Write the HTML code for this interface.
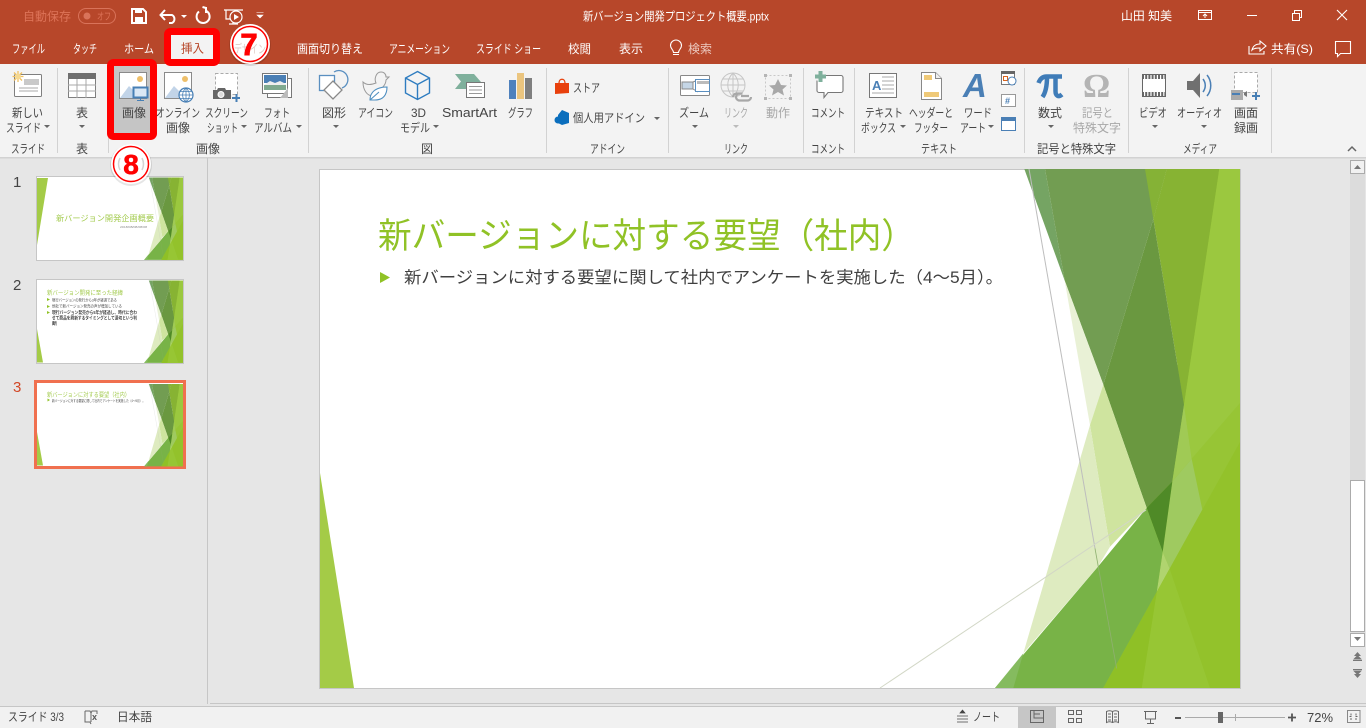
<!DOCTYPE html>
<html lang="ja"><head><meta charset="utf-8"><title>新バージョン開発プロジェクト概要.pptx</title>
<style>
html,body{margin:0;padding:0;width:1366px;height:728px;overflow:hidden;background:#e6e6e6}
svg{display:block}
text{font-family:"Liberation Sans","Noto Sans CJK JP",sans-serif;font-size:12px;fill:#444}
.t{fill:#fff}
.g{fill:#a8a8a8}
.c{text-anchor:middle}
</style></head><body>
<svg xmlns="http://www.w3.org/2000/svg" width="1366" height="728" viewBox="0 0 1366 728">
<defs>
<g id="deco" transform="translate(980,169) scale(.33333,.33789) translate(0,-12)">
<polygon points="718,12 780,12 780,1548 370,1548 500,1015" fill="#97c535"/>
<polygon points="133,12 195,12 254,342" fill="#75a463"/>
<polygon points="195,12 560,12 520,160 370,650 254,342" fill="#729d52"/>
<polygon points="495,12 560,12 520,160" fill="#85b236"/>
<polygon points="560,12 718,12 612,710 520,160" fill="#87b333"/>
<polygon points="370,650 520,160 612,710 577,937 500,1015" fill="#6a9840"/>
<polygon points="718,12 780,12 780,705 635,870 612,710" fill="#9bc83f"/>
<polygon points="612,710 635,870 577,937" fill="#a0ca55"/>
<polygon points="635,870 780,705 780,820 667,1020" fill="#97c535"/>
<polygon points="577,937 635,870 667,1020 569,1195 548,1145" fill="#9fca60"/>
<polygon points="548,1145 569,1195 530,1265" fill="#b0d46f"/>
<polygon points="500,1015 577,937 548,1145" fill="#4f8a27"/>
<polygon points="500,1015 548,1145 530,1265 370,1548 45,1548 353,1190" fill="#78b347"/>
<polygon points="45,1548 130,1445 100,1548" fill="#85bb5f"/>
<polygon points="780,820 780,1548 370,1548" fill="#93c22b"/>
<polygon points="530,1265 569,1195 690,1548 485,1548" fill="#97c634"/>
<polygon points="530,1265 485,1548 370,1548" fill="#8fc026"/>
<polygon points="254,342 370,650 330,770" fill="#e9f1d6"/>
<polygon points="330,770 370,650 500,1015 390,1130" fill="#cfe49f"/>
<polygon points="330,770 390,1130 353,1190 130,1445" fill="#deebc0"/>
<line x1="147" y1="12" x2="345" y2="1135" stroke="#bdbdbd" stroke-width="3"/>
<line x1="345" y1="1135" x2="410" y2="1490" stroke="#8fb070" stroke-width="2.5"/>
</g>
</defs>

<!-- backgrounds -->
<rect width="1366" height="728" fill="#e6e6e6"/>
<rect width="1366" height="64" fill="#b7472a"/>
<rect y="64" width="1366" height="93" fill="#f3f3f3"/>
<rect y="157" width="1366" height="1.5" fill="#d2d2d2"/>
<rect x="207" y="158" width="1" height="546" fill="#c6c6c6"/>
<rect x="210" y="703" width="1156" height="1" fill="#c6c6c6"/>
<rect y="706" width="1366" height="22" fill="#f1f1f1"/>
<rect y="706" width="1366" height="1" fill="#c6c6c6"/>

<!-- title bar -->
<text x="23" y="20.5" textLength="48" lengthAdjust="spacingAndGlyphs" style="fill:#dd7358">自動保存</text>
<rect x="78.5" y="8.5" width="37" height="15" rx="7.5" fill="none" stroke="#d9735a"/>
<circle cx="87" cy="16" r="3.5" fill="#d9735a"/>
<text x="97" y="20" textLength="14" lengthAdjust="spacingAndGlyphs" style="font-size:10px;fill:#dd7358">オフ</text>
<path d="M132 9h11l3 3v11h-14z" fill="none" stroke="#fff" stroke-width="2"/>
<rect x="135" y="9" width="7" height="4" fill="#fff"/><rect x="135" y="17" width="8" height="6" fill="#fff"/>
<path d="M161 15h11a4.5 4.5 0 0 1 0 8h-3M165 10l-4.500 5 4.500 5" fill="none" stroke="#fff" stroke-width="2"/>
<path d="M181 15h6l-3 3z" fill="#fff"/>
<path d="M199 11.500a6.500 6.500 0 1 0 7.500-.5M206 7v6M206 8l-3.500-1" fill="none" stroke="#fff" stroke-width="2"/>
<path d="M224 10h19M226 10v9h7M233 19v5M229 24h9" fill="none" stroke="#fff" stroke-width="1.200"/>
<circle cx="236" cy="17" r="6" fill="#b7472a" stroke="#fff" stroke-width="1.200"/><path d="M234 14l5 3-5 3z" fill="#fff"/>
<path d="M256.500 12.500h7M257 15h6l-3 3z" fill="#fff" stroke="#fff" stroke-width=".6"/>
<text class="t" x="583" y="20.500" textLength="186" lengthAdjust="spacingAndGlyphs">新バージョン開発プロジェクト概要.pptx</text>
<text class="t" x="1121" y="20" textLength="51" lengthAdjust="spacingAndGlyphs">山田 知美</text>
<rect x="1198.500" y="10.500" width="13" height="9" fill="none" stroke="#fff"/><path d="M1198 12.500h14M1205 18v-4M1203 16l2-2 2 2" fill="none" stroke="#fff"/>
<rect x="1247" y="15" width="10" height="1" fill="#fff"/>
<path d="M1292.500 13.500h7v7h-7zM1294.500 13v-2.500h7v7h-2" fill="none" stroke="#fff"/>
<path d="M1337 10l10 10M1347 10l-10 10" stroke="#fff" stroke-width="1.100"/>

<!-- tabs -->
<text class="t" x="12" y="53" textLength="33" lengthAdjust="spacingAndGlyphs">ファイル</text>
<text class="t" x="73" y="53" textLength="24" lengthAdjust="spacingAndGlyphs">タッチ</text>
<text class="t" x="124" y="53" textLength="30" lengthAdjust="spacingAndGlyphs">ホーム</text>
<rect x="167.500" y="31.500" width="49" height="31" rx="3" fill="#f3f3f3" stroke="#f00" stroke-width="7"/>
<rect x="171" y="59" width="42" height="4" fill="#f00"/>
<text x="181" y="52.500" textLength="23" lengthAdjust="spacingAndGlyphs" style="fill:#b7472a">挿入</text>
<text class="t" x="297" y="53" textLength="66" lengthAdjust="spacingAndGlyphs">画面切り替え</text>
<text class="t" x="389" y="53" textLength="61" lengthAdjust="spacingAndGlyphs">アニメーション</text>
<text class="t" x="476" y="53" textLength="65" lengthAdjust="spacingAndGlyphs">スライド ショー</text>
<text class="t" x="568" y="53" textLength="23" lengthAdjust="spacingAndGlyphs">校閲</text>
<text class="t" x="619" y="53" textLength="24" lengthAdjust="spacingAndGlyphs">表示</text>
<path d="M673 54.500h6M673.500 52.500c0-3-3-3.500-3-7a5.500 5.500 0 0 1 11 0c0 3.500-3 4-3 7z" fill="none" stroke="#fff" stroke-width="1.100"/>
<text x="688" y="53" textLength="24" lengthAdjust="spacingAndGlyphs" style="fill:#ecc9bf">検索</text>
<path d="M1249 46v8h15v-3M1252 50c1-4 4-6 8-6v-3l6 5-6 5v-3c-3 0-6 0-8 2z" fill="none" stroke="#fff" stroke-width="1.100"/>
<text class="t" x="1271" y="53" textLength="42" lengthAdjust="spacingAndGlyphs">共有(S)</text>
<path d="M1335.500 41.500h15v12h-10l-3 3v-3h-2z" fill="none" stroke="#fff" stroke-width="1.100"/>

<!-- ribbon separators -->
<g fill="#d2d2d2">
<rect x="57" y="68" width="1" height="85"/><rect x="108" y="68" width="1" height="85"/><rect x="308" y="68" width="1" height="85"/><rect x="546" y="68" width="1" height="85"/><rect x="668" y="68" width="1" height="85"/><rect x="803" y="68" width="1" height="85"/><rect x="854" y="68" width="1" height="85"/><rect x="1024" y="68" width="1" height="85"/><rect x="1128" y="68" width="1" height="85"/><rect x="1271" y="68" width="1" height="85"/>
</g>

<!-- 画像 highlighted button -->
<rect x="110.500" y="62.500" width="43" height="74" rx="3" fill="#c5c5c5" stroke="#f00" stroke-width="7"/>

<!-- icons: slide -->
<rect x="14.500" y="74.500" width="27" height="22" rx="1" fill="#fff" stroke="#7f7f7f"/>
<rect x="24" y="79" width="15" height="6" fill="#c9c9c9"/>
<path d="M19 88h19M19 91h19" stroke="#aaa"/>
<g stroke="#f0c060" stroke-width="1.300"><path d="M18 71v11M12.500 76.500h11M14 72.500l8 8M22 72.500l-8 8"/></g><circle cx="18" cy="76.500" r="3" fill="#f5d890"/>
<!-- table -->
<rect x="68.500" y="73.500" width="27" height="24" fill="#fff" stroke="#7f7f7f"/><rect x="68" y="73" width="28" height="6" fill="#6f6f6f"/>
<path d="M68 85h28M68 91h28M77 79v19M86 79v19" stroke="#a9a9a9"/>
<!-- picture -->
<rect x="119.500" y="72.500" width="27" height="26" fill="#fff" stroke="#8a8a8a"/><circle cx="140" cy="79" r="3" fill="#eebf6a"/><path d="M120 98l9-12 5 5 3-3 8 10z" fill="#c2d4e8"/>
<rect x="133.500" y="87.500" width="14" height="10" fill="#dbe8f5" stroke="#477fb5" stroke-width="2"/><path d="M140.500 98v2M137 100.500h7" stroke="#477fb5"/>
<!-- online -->
<rect x="164.500" y="72.500" width="27" height="26" fill="#fff" stroke="#8a8a8a"/><circle cx="185" cy="79" r="3" fill="#eebf6a"/><path d="M165 98l9-12 5 5 3-3 7 10z" fill="#c2d4e8"/>
<circle cx="186" cy="95" r="7" fill="#fff" stroke="#477fb5" stroke-width="1.200"/><path d="M179 95h14M180.500 91.500h11M180.500 98.500h11M186 88v14M186 88c-4.500 4-4.500 10 0 14M186 88c4.500 4 4.500 10 0 14" fill="none" stroke="#477fb5" stroke-width=".8"/>
<!-- screenshot -->
<rect x="215.500" y="73.500" width="22" height="21" fill="#fff" stroke="#aaa" stroke-dasharray="3 2"/>
<path d="M213 90h4l1-2h7l1 2h5v9h-18z" fill="#666"/><circle cx="221" cy="94.500" r="3" fill="#ddd" stroke="#fff"/>
<path d="M232 98h8M236.500 94v8" stroke="#477fb5" stroke-width="2"/>
<!-- album -->
<rect x="267.500" y="78.500" width="24" height="19" fill="#fff" stroke="#777"/><rect x="262.500" y="73.500" width="25" height="20" fill="#fff" stroke="#777"/><rect x="264" y="75" width="22" height="8" fill="#4a7fb5"/><path d="M264 85l6-4 5 2 5-2 6 3v3h-22z" fill="#eee"/><rect x="264" y="85" width="22" height="5" fill="#7fa98f"/><path d="M280 98l8-10v10z" fill="#bbb"/>
<!-- shapes -->
<rect x="319.500" y="75.500" width="15" height="15" fill="#fff" stroke="#5a8fc0" stroke-width="1.300"/><path d="M334 72a9 9 0 1 1 8 16" fill="none" stroke="#5a8fc0" stroke-width="1.300"/><path d="M333 81l9 9-9 9-9-9z" fill="#fff" stroke="#8a8a8a" stroke-width="1.300"/>
<!-- duck/icon -->
<path d="M363 82c3 3 8 3 13 1-2-4 0-11 5-11 3 0 5 2 5 5h3l-3 3c0 3-2 6-4 8l-9 8c-6 0-10-6-10-14z" fill="none" stroke="#999"/><path d="M370 100c0-8 6-13 17-13 0 8-4 13-12 13zM370 100l9-8" fill="#fff" stroke="#4f8fc0" stroke-width="1.100"/>
<!-- cube -->
<path d="M417.500 71.500l12 6.500v15l-12 6.500-12-6.500v-15zM405.500 78l12 6.500 12-6.500M417.500 84.500v15" fill="none" stroke="#2e7cc0" stroke-width="1.400"/>
<!-- smartart -->
<path d="M455 74h19l7 8-7 7h-19l6-7.500z" fill="#7fb09c"/><rect x="466.500" y="82.500" width="18" height="15" fill="#fff" stroke="#777"/><path d="M469 86.500h13M469 90h13M469 93.500h13" stroke="#999"/>
<!-- chart -->
<rect x="509" y="80" width="7" height="19" fill="#4f81bd"/><rect x="517" y="73" width="7" height="26" fill="#ebc57f"/><rect x="525" y="78" width="7" height="21" fill="#7f7f7f"/>
<!-- store/addin -->
<path d="M555 83h14v10l-14 1z" fill="#e8400c"/><path d="M559 83c0-5 6-5 6 0" fill="none" stroke="#e8400c" stroke-width="1.300"/>
<path d="M562 110l7 3v10l-7 2-4-2v-8z" fill="#0a6ebd"/><circle cx="558" cy="120" r="3.500" fill="#0a6ebd"/>
<!-- zoom -->
<rect x="680.500" y="75.500" width="29" height="20" rx="1" fill="#fff" stroke="#888"/><rect x="682" y="82" width="11" height="7" fill="#c5d6e6" stroke="#888"/><path d="M693 82l5-2M693 89l5 3" stroke="#888"/><rect x="695.500" y="79.500" width="14" height="12" fill="#fff" stroke="#5a8fc0"/><rect x="697" y="81" width="12" height="3" fill="#bbb"/>
<!-- link -->
<g fill="none" stroke="#c6c6c6"><circle cx="733" cy="85" r="12"/><path d="M721 85h24M723 79h20M723 91h20M733 73v24M733 73c-7 7-7 17 0 24M733 73c7 7 7 17 0 24"/></g>
<path d="M733 97a3.500 3.500 0 0 1 3.500-3.500h6M751 97a3.500 3.500 0 0 1-3.500 3.500h-8a3.500 3.500 0 0 1 0-7M741 96h8" fill="none" stroke="#a8a8a8" stroke-width="2.200"/>
<!-- action -->
<rect x="765.500" y="75.500" width="25" height="23" fill="none" stroke="#c8c8c8" stroke-dasharray="2 2"/><path d="M778 79l3 6 6 .5-4.500 4 1.500 6-6-3.500-6 3.500 1.500-6-4.500-4 6-.5z" fill="#a8a8a8"/><g fill="#b5b5b5"><rect x="764" y="74" width="3" height="3"/><rect x="789" y="74" width="3" height="3"/><rect x="764" y="97" width="3" height="3"/><rect x="789" y="97" width="3" height="3"/></g>
<!-- comment -->
<path d="M822 75.500h19a2 2 0 0 1 2 2v13a2 2 0 0 1-2 2h-13l-4 5v-5h-5a2 2 0 0 1-2-2v-10" fill="#fff" stroke="#777" stroke-width="1.100"/><path d="M815 76.500h11M820.500 71v11" stroke="#7fb09c" stroke-width="4"/>
<!-- textbox -->
<rect x="869.500" y="73.500" width="27" height="24" fill="#fff" stroke="#777"/><text x="872" y="90" style="font-size:13px;fill:#4a7fb5;font-weight:bold">A</text><path d="M882 77h12M882 81h12M882 85h12M882 89h12M872 93h22" stroke="#aaa"/>
<!-- header -->
<path d="M921.500 72.500h14l6 6v21h-20z" fill="#fff" stroke="#888"/><path d="M935.500 72.500v6h6" fill="#eee" stroke="#888"/><rect x="924" y="75" width="8" height="5" fill="#efc978"/><rect x="924" y="92" width="15" height="5" fill="#efc978"/>
<!-- wordart -->
<text x="963" y="97" style="font-size:33px;font-weight:bold;font-style:italic;fill:#4a7fb5">A</text>
<rect x="1001.500" y="71.500" width="13" height="13" fill="#fff" stroke="#777"/><rect x="1001" y="71" width="14" height="3" fill="#666"/><rect x="1003.500" y="76.500" width="4" height="4" fill="none" stroke="#d9641e"/><circle cx="1012" cy="81" r="4" fill="#fff" stroke="#4a7fb5"/>
<rect x="1001.500" y="94.500" width="14" height="12" fill="#fff" stroke="#999"/><text x="1005" y="104" style="font-size:9px;font-weight:bold;fill:#4a7fb5">#</text>
<rect x="1001.500" y="117.500" width="14" height="13" fill="#fff" stroke="#4a7fb5"/><rect x="1001" y="117" width="15" height="4" fill="#4a7fb5"/>
<!-- pi omega -->
<path d="M1038.500 83c1.500-4 4-6.500 8-6.500h15.500M1047 77c0 8-1 15-4.500 20M1055.500 77v14c0 5 3 6.500 6.500 3.500" fill="none" stroke="#3f7cb8" stroke-width="4.500"/>
<text x="1083" y="97" style="font-size:34px;font-weight:bold;fill:#b4b4b4;font-family:'Liberation Serif',serif">Ω</text>
<!-- video -->
<rect x="1142.500" y="74.500" width="23" height="22" fill="#fff" stroke="#666" stroke-width="1"/><path d="M1142 77h24M1142 94h24" stroke="#666" stroke-width="4" stroke-dasharray="2 1.200"/>
<!-- audio -->
<path d="M1187 81h6l7-8v25l-7-8h-6z" fill="#707070"/><path d="M1203 79c3 4 3 9 0 13M1207 75c5 6 5 15 0 21" fill="none" stroke="#4a7fb5" stroke-width="1.500"/>
<!-- screen rec -->
<rect x="1234.500" y="72.500" width="23" height="20" fill="#fff" stroke="#aaa" stroke-dasharray="3 2"/><rect x="1231" y="90" width="12" height="10" fill="#aaa"/><rect x="1232" y="93" width="8" height="2" fill="#4a7fb5"/><path d="M1244 93l3-2v6l-3-2z" fill="#777"/><path d="M1252 96h8M1256 92v8" stroke="#477fb5" stroke-width="2"/>

<!-- ribbon labels -->
<g>
<text x="12" y="117" textLength="31" lengthAdjust="spacingAndGlyphs">新しい</text><text x="6" y="132" textLength="35" lengthAdjust="spacingAndGlyphs">スライド</text>
<text class="c" x="82" y="117">表</text>
<text x="122" y="117" textLength="24" lengthAdjust="spacingAndGlyphs">画像</text>
<text x="156" y="117" textLength="44" lengthAdjust="spacingAndGlyphs">オンライン</text><text x="166" y="132" textLength="24" lengthAdjust="spacingAndGlyphs">画像</text>
<text x="205" y="117" textLength="43" lengthAdjust="spacingAndGlyphs">スクリーン</text><text x="207" y="132" textLength="31" lengthAdjust="spacingAndGlyphs">ショット</text>
<text x="264" y="117" textLength="26" lengthAdjust="spacingAndGlyphs">フォト</text><text x="254" y="132" textLength="38" lengthAdjust="spacingAndGlyphs">アルバム</text>
<text x="322" y="117" textLength="24" lengthAdjust="spacingAndGlyphs">図形</text>
<text x="358" y="117" textLength="35" lengthAdjust="spacingAndGlyphs">アイコン</text>
<text x="411" y="117" textLength="15" lengthAdjust="spacingAndGlyphs">3D</text><text x="400" y="132" textLength="30" lengthAdjust="spacingAndGlyphs">モデル</text>
<text x="442" y="117" textLength="55" lengthAdjust="spacingAndGlyphs" style="font-size:13px">SmartArt</text>
<text x="508" y="117" textLength="25" lengthAdjust="spacingAndGlyphs">グラフ</text>
<text x="573" y="92" textLength="27" lengthAdjust="spacingAndGlyphs">ストア</text>
<text x="573" y="122" textLength="72" lengthAdjust="spacingAndGlyphs">個人用アドイン</text>
<text x="679" y="117" textLength="30" lengthAdjust="spacingAndGlyphs">ズーム</text>
<text class="g" x="724" y="117" textLength="24" lengthAdjust="spacingAndGlyphs">リンク</text>
<text class="g" x="766" y="117" textLength="24" lengthAdjust="spacingAndGlyphs">動作</text>
<text x="811" y="117" textLength="34" lengthAdjust="spacingAndGlyphs">コメント</text>
<text x="865" y="117" textLength="38" lengthAdjust="spacingAndGlyphs">テキスト</text><text x="861" y="132" textLength="35" lengthAdjust="spacingAndGlyphs">ボックス</text>
<text x="909" y="117" textLength="44" lengthAdjust="spacingAndGlyphs">ヘッダーと</text><text x="914" y="132" textLength="34" lengthAdjust="spacingAndGlyphs">フッター</text>
<text x="964" y="117" textLength="28" lengthAdjust="spacingAndGlyphs">ワード</text><text x="960" y="132" textLength="26" lengthAdjust="spacingAndGlyphs">アート</text>
<text x="1038" y="117" textLength="24" lengthAdjust="spacingAndGlyphs">数式</text>
<text class="g" x="1082" y="117" textLength="31" lengthAdjust="spacingAndGlyphs">記号と</text><text class="g" x="1073" y="132" textLength="48" lengthAdjust="spacingAndGlyphs">特殊文字</text>
<text x="1139" y="117" textLength="28" lengthAdjust="spacingAndGlyphs">ビデオ</text>
<text x="1177" y="117" textLength="45" lengthAdjust="spacingAndGlyphs">オーディオ</text>
<text x="1234" y="117" textLength="24" lengthAdjust="spacingAndGlyphs">画面</text><text x="1234" y="132" textLength="24" lengthAdjust="spacingAndGlyphs">録画</text>
</g>
<!-- dropdown arrows -->
<g fill="#666">
<path d="M44 125h6l-3 3zM79 125h6l-3 3zM241 125h6l-3 3zM296 125h6l-3 3zM333 125h6l-3 3zM433 125h6l-3 3zM654 117h6l-3 3zM692 125h6l-3 3zM900 125h6l-3 3zM988 125h6l-3 3zM1048 125h6l-3 3zM1152 125h6l-3 3zM1201 125h6l-3 3z"/>
<path d="M733 125h6l-3 3z" fill="#bbb"/>
</g>
<path d="M1348 151l4-4 4 4" fill="none" stroke="#666" stroke-width="1.500"/>
<!-- group labels -->
<text x="11" y="153" textLength="34" lengthAdjust="spacingAndGlyphs">スライド</text>
<text class="c" x="82" y="153">表</text>
<text x="196" y="153" textLength="24" lengthAdjust="spacingAndGlyphs">画像</text>
<text class="c" x="427" y="153">図</text>
<text x="590" y="153" textLength="35" lengthAdjust="spacingAndGlyphs">アドイン</text>
<text x="724" y="153" textLength="24" lengthAdjust="spacingAndGlyphs">リンク</text>
<text x="811" y="153" textLength="34" lengthAdjust="spacingAndGlyphs">コメント</text>
<text x="921" y="153" textLength="36" lengthAdjust="spacingAndGlyphs">テキスト</text>
<text x="1037" y="153" textLength="79" lengthAdjust="spacingAndGlyphs">記号と特殊文字</text>
<text x="1183" y="153" textLength="34" lengthAdjust="spacingAndGlyphs">メディア</text>

<!-- markers -->
<circle cx="250" cy="45" r="21" fill="#000" opacity=".12"/>
<circle cx="250" cy="44" r="20" fill="#fff"/>
<circle cx="250" cy="44" r="17.500" fill="none" stroke="#f00" stroke-width="1.500"/>
<text x="234" y="53" textLength="32" lengthAdjust="spacingAndGlyphs" style="fill:#dcc9c3">デザイン</text>
<text class="c" x="249" y="55" style="font-size:31px;font-weight:bold;fill:#f00;stroke:#f00;stroke-width:.9">7</text>
<!-- left panel -->
<text x="13" y="187" style="font-size:15px">1</text>
<text x="13" y="290" style="font-size:15px">2</text>
<text x="13" y="392" style="font-size:15px;fill:#d24726">3</text>

<rect x="36.500" y="176.500" width="147" height="84" fill="#fff" stroke="#c6c6c6"/>
<use href="#deco" transform="translate(37,177.500) scale(.1587) translate(-320,-169)"/>
<polygon points="37,178 48,178 37,245" fill="#a4cb47"/>
<text x="56" y="221" textLength="98" lengthAdjust="spacingAndGlyphs" style="font-size:8.200px;fill:#a5cc52">新バージョン開発企画概要</text>
<text x="120" y="228" textLength="27" lengthAdjust="spacingAndGlyphs" style="font-size:3px;fill:#888">2018/08/08/08/08</text>

<rect x="36.500" y="279.500" width="147" height="84" fill="#fff" stroke="#c6c6c6"/>
<use href="#deco" transform="translate(37,280.500) scale(.1587) translate(-320,-169)"/>
<polygon points="37,329 43,362.500 37,362.500" fill="#a4cb47"/>
<text x="47" y="295" textLength="76" lengthAdjust="spacingAndGlyphs" style="font-size:6.200px;fill:#a5cc52">新バージョン開発に至った経緯</text>
<path d="M47 298l3 1.500-3 1.500zM47 305l3 1.500-3 1.500zM47 311l3 1.500-3 1.500z" fill="#90c226"/>
<text x="52" y="301.500" textLength="65" lengthAdjust="spacingAndGlyphs" style="font-size:4px">現行バージョンの発行から3年が経過である</text>
<text x="52" y="307.500" textLength="70" lengthAdjust="spacingAndGlyphs" style="font-size:4px">他社で新バージョン発売の声が増加している</text>
<text x="52" y="314" textLength="85" lengthAdjust="spacingAndGlyphs" style="font-size:4.600px;font-weight:bold">現行バージョン発売から5年が経過し、時代に合わ</text>
<text x="52" y="319.500" textLength="85" lengthAdjust="spacingAndGlyphs" style="font-size:4.600px;font-weight:bold">せて商品を刷新するタイミングとして適切という判</text>
<text x="52" y="325" textLength="5" lengthAdjust="spacingAndGlyphs" style="font-size:4.600px;font-weight:bold">断</text>

<rect x="35.500" y="381.500" width="149" height="86" fill="#fff" stroke="#f0704f" stroke-width="3"/>
<use href="#deco" transform="translate(37,384) scale(.1587) translate(-320,-169)"/>
<polygon points="37,432 43,465.500 37,465.500" fill="#a4cb47"/>
<text x="47" y="397" textLength="83" lengthAdjust="spacingAndGlyphs" style="font-size:6.200px;fill:#a5cc52">新バージョンに対する要望（社内）</text>
<path d="M47.500 398.500l2.500 1.500-2.500 1.500z" fill="#90c226"/>
<text x="52" y="402" textLength="93" lengthAdjust="spacingAndGlyphs" style="font-size:3.400px">新バージョンに対する要望に関して社内でアンケートを実施した（4～5月）。</text>

<circle cx="131" cy="165" r="21" fill="#000" opacity=".1"/>
<circle cx="131" cy="164" r="20" fill="#fff"/>
<circle cx="131" cy="164" r="17.500" fill="none" stroke="#f00" stroke-width="1.500"/>
<path d="M120 158c-2 4-2 8 0 12M142 158c2 4 2 8 0 12" fill="none" stroke="#d4d4d4" stroke-width="1.500"/>
<text class="c" x="131" y="174" style="font-size:28px;font-weight:bold;fill:#f00;stroke:#f00;stroke-width:.6">8</text>

<!-- main slide -->
<rect x="319.500" y="169.500" width="921" height="519" fill="#fff" stroke="#c6c6c6"/>
<use href="#deco"/>
<polygon points="320,473 354,688 320,688" fill="#a4cb47"/>
<line x1="880" y1="688" x2="1146" y2="510" stroke="#d2d7c6"/>
<text x="378" y="248" textLength="537" lengthAdjust="spacingAndGlyphs" style="font-size:35px;fill:#90c226">新バージョンに対する要望（社内）</text>
<polygon points="380,272 390,277.500 380,283" fill="#90c226"/>
<text x="404" y="283" textLength="599" lengthAdjust="spacingAndGlyphs" style="font-size:16.500px;fill:#404040">新バージョンに対する要望に関して社内でアンケートを実施した（4～5月）。</text>

<!-- scrollbar -->
<rect x="1350" y="160" width="15" height="486" fill="#dcdcdc"/>
<rect x="1350.500" y="160.500" width="14" height="13" fill="#f1f1f1" stroke="#ababab"/><path d="M1354 169h7l-3.500-4z" fill="#777"/>
<rect x="1350.500" y="480.500" width="14" height="151" fill="#fff" stroke="#ababab"/>
<rect x="1350.500" y="633.500" width="14" height="13" fill="#fff" stroke="#ababab"/><path d="M1354 637h7l-3.500 4z" fill="#777"/>
<path d="M1357.500 652l-3.500 4h7zM1357.500 655l-4.500 4.500h9zM1353 660h9v1h-9z" fill="#777"/>
<path d="M1353 669h9v1h-9zM1353 670.500h9l-4.500 4.500zM1354 674h7l-3.500 4z" fill="#777"/>

<!-- status bar -->
<text x="8" y="721" textLength="56" lengthAdjust="spacingAndGlyphs">スライド 3/3</text>
<path d="M85 711h5l1 2 1-2h5v3M85 711v11h5l1 2M91 713v9" fill="none" stroke="#666"/><text x="92" y="720" style="font-size:9px;font-weight:bold;fill:#555">x</text>
<text x="117" y="721" textLength="35" lengthAdjust="spacingAndGlyphs">日本語</text>
<path d="M957 716h11M957 719h11M957 722h11M960 713l2.500-3 2.500 3z" fill="#444" stroke="#444" stroke-width=".7"/>
<text x="973" y="721" textLength="27" lengthAdjust="spacingAndGlyphs">ノート</text>
<rect x="1018" y="707" width="38" height="21" fill="#c6c6c6"/>
<rect x="1030.500" y="710.500" width="13" height="12" fill="none" stroke="#666"/><path d="M1034 711v7h9M1034 714h6" fill="none" stroke="#666"/>
<g fill="none" stroke="#666"><rect x="1068.500" y="710.500" width="5" height="4"/><rect x="1076.500" y="710.500" width="5" height="4"/><rect x="1068.500" y="718.500" width="5" height="4"/><rect x="1076.500" y="718.500" width="5" height="4"/>
<path d="M1106.500 711.500c2-1 4-1 6 0 2-1 4-1 6 0v11c-2-1-4-1-6 0-2-1-4-1-6 0zM1112.500 711.500v11M1108 714h3M1108 717h3M1108 720h3M1114 714h3M1114 717h3M1114 720h3"/>
<path d="M1144 711.500h13M1145.500 712v7h10v-7M1150.500 719v4M1147 723.500h7"/></g>
<rect x="1175" y="717" width="6" height="2" fill="#555"/>
<rect x="1185" y="717" width="100" height="1" fill="#aaa"/><rect x="1235" y="714" width="1" height="7" fill="#aaa"/>
<rect x="1218" y="712" width="5" height="11" fill="#666"/>
<path d="M1288 717.500h8M1292 713.500v8" stroke="#555" stroke-width="1.800"/>
<text x="1307" y="722" textLength="26" lengthAdjust="spacingAndGlyphs" style="font-size:13px">72%</text>
<rect x="1347.500" y="710.500" width="12.500" height="12" fill="none" stroke="#888"/>
<path d="M1351 713.500v2M1356 713.500v2M1351 718v2M1356 718v2M1349.500 716.500h2M1355.500 716.500h2" stroke="#666"/>
</svg>
</body></html>
